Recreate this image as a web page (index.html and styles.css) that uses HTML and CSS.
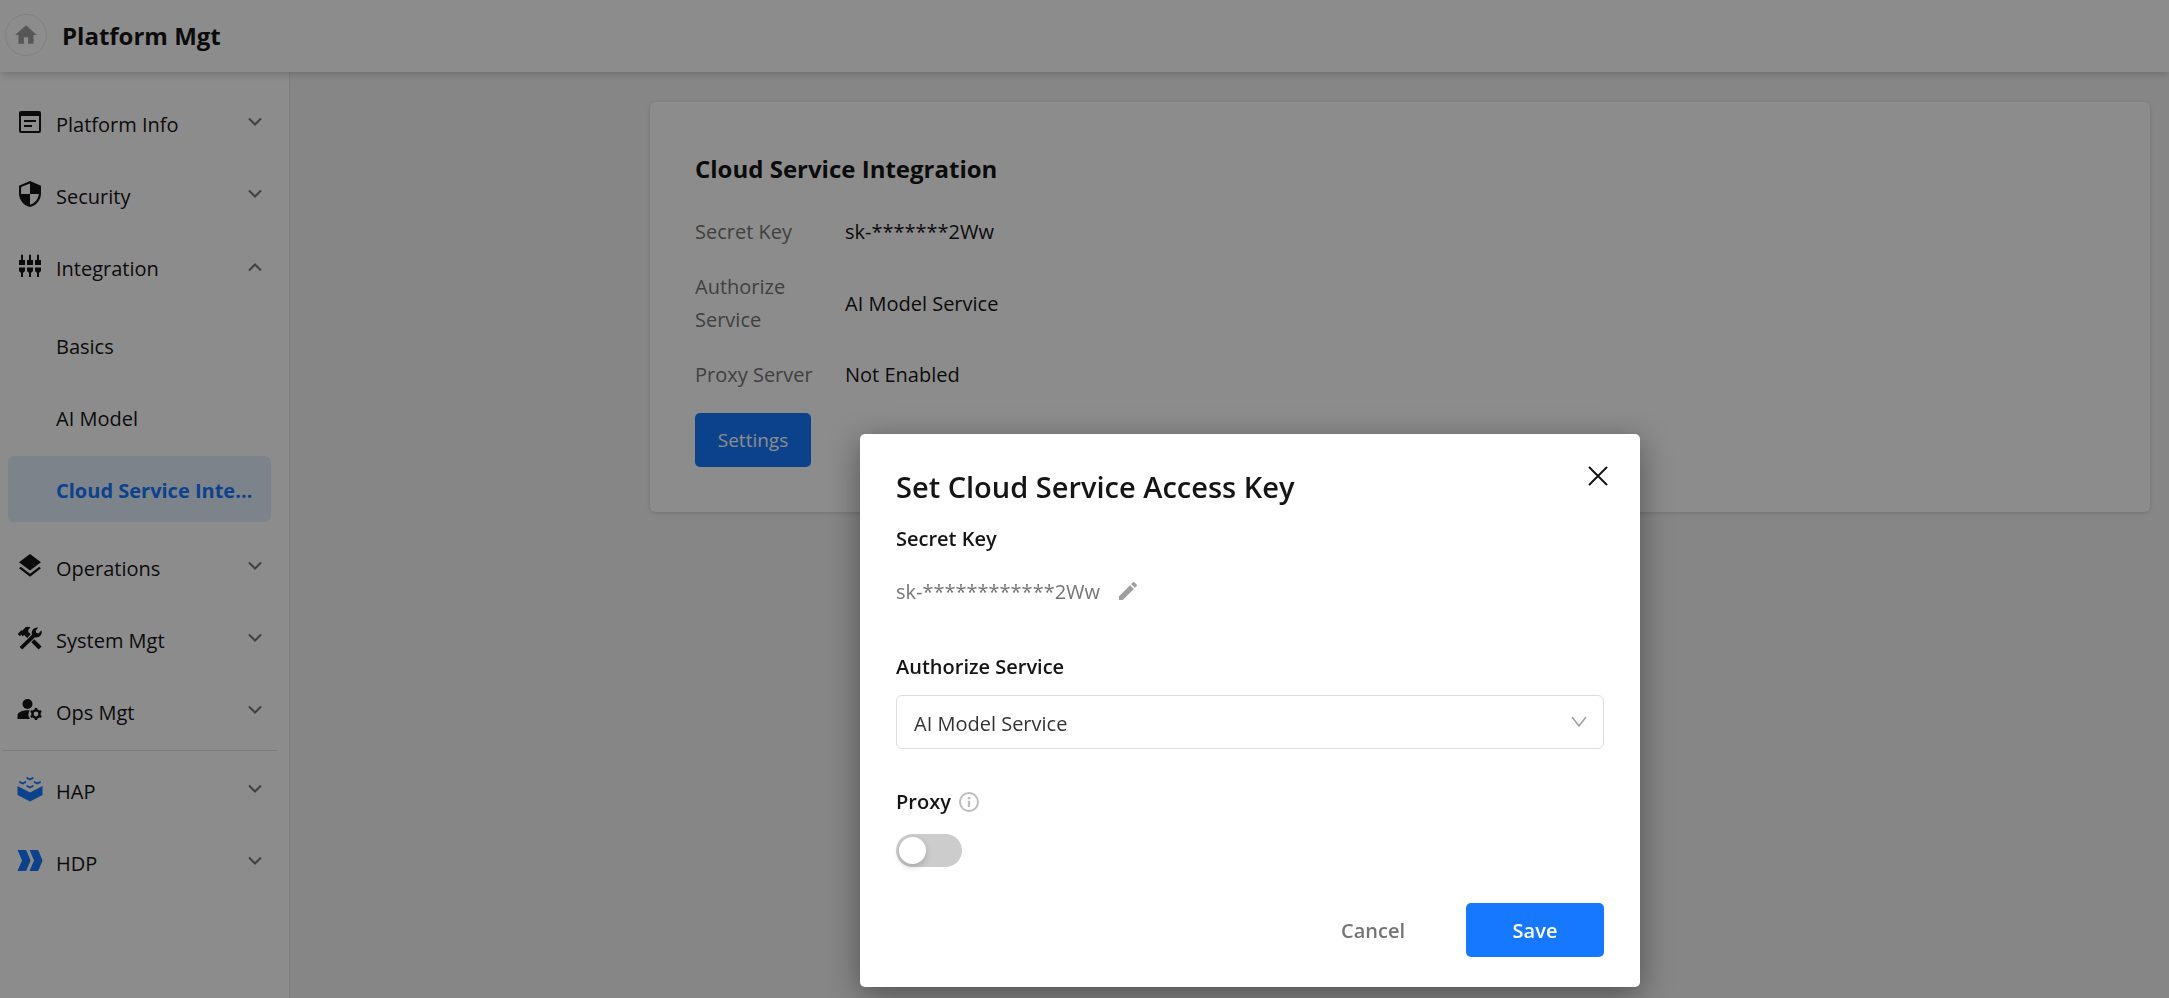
FILE: index.html
```html
<!DOCTYPE html>
<html lang="en">
<head>
  <meta charset="UTF-8">
  <meta name="viewport" content="width=device-width, initial-scale=1.0">
  <title>Platform Mgt - Cloud Service Integration</title>
  <link rel="stylesheet" href="styles.css">
</head>
<body>
  <svg class="defs" aria-hidden="true">
    <symbol id="chevron" viewBox="0 0 14 10"><path d="M1 1.500l6 6 6-6" fill="none" stroke="currentColor" stroke-width="2"/></symbol>
  </svg>

  <header class="topbar">
    <a href="#" class="home" aria-label="Home">
      <svg width="26" height="26" viewBox="0 0 24 24"><path d="M10 20v-6h4v6h5v-8h3L12 3 2 12h3v8z"/></svg>
    </a>
    <h1>Platform Mgt</h1>
  </header>

  <div class="layout">
    <nav class="sidebar">
      <a href="#" class="item">
        <svg class="icon" viewBox="0 0 26 26"><path fill-rule="evenodd" d="M4 2h18a2 2 0 0 1 2 2v18a2 2 0 0 1-2 2H4a2 2 0 0 1-2-2V4a2 2 0 0 1 2-2zm0 5v15h18V7zM7 11h12v2H7zm0 5h8v2H7z"/></svg>
        <span class="label">Platform Info</span>
        <svg class="arrow"><use href="#chevron"/></svg>
      </a>
      <a href="#" class="item">
        <svg class="icon" viewBox="0 0 26 26"><path fill-rule="evenodd" d="M13 0L2 4.700v7.500C2 18.800 6.500 24.500 13 26c6.500-1.500 11-7.200 11-13.800V4.700zM13 2.600V13H4.100V6zM13 13h8.900c-.6 5-4 9.300-8.900 10.800z"/></svg>
        <span class="label">Security</span>
        <svg class="arrow"><use href="#chevron"/></svg>
      </a>
      <a href="#" class="item">
        <svg class="icon" viewBox="0 0 26 26"><path d="M4 2.500a1 1 0 0 1 2 0V7h2v5H2V7h2zM12 2.500a1 1 0 0 1 2 0V7h2v5h-6V7h2zM20 2.500a1 1 0 0 1 2 0V7h2v5h-6V7h2zM2 14.500h6V17c0 1.300-.8 2.300-2 2.800V24H4v-4.200c-1.200-.5-2-1.500-2-2.800zM10 14.500h6V17c0 1.300-.8 2.300-2 2.800V24h-2v-4.200c-1.200-.5-2-1.500-2-2.800zM18 14.500h6V17c0 1.300-.8 2.300-2 2.800V24h-2v-4.200c-1.200-.5-2-1.500-2-2.800z"/></svg>
        <span class="label">Integration</span>
        <svg class="arrow up"><use href="#chevron"/></svg>
      </a>
      <div class="submenu">
        <a href="#" class="item sub"><span class="label">Basics</span></a>
        <a href="#" class="item sub"><span class="label">AI Model</span></a>
        <a href="#" class="item sub active"><span class="label">Cloud Service Integration</span></a>
      </div>
      <a href="#" class="item">
        <svg class="icon" viewBox="0 0 26 26"><path d="M13 1l11 8.300-11 8.300L2 9.300zM13 20.800l9.200-7L24 15.200 13 23.700 2 15.200l1.800-1.400z"/></svg>
        <span class="label">Operations</span>
        <svg class="arrow"><use href="#chevron"/></svg>
      </a>
      <a href="#" class="item">
        <svg class="icon" viewBox="0 0 26 26"><path d="M.8 9l3.400-3.800 1 .6L8.500 2.300C9.500 1.500 11 1.500 13.500 2.200L11.200 5l.3 2.300 2.300 2-3.600 3.700-3-3-1.700 1.500L4.400 9.400l-1.600 1.800z"/><path d="M2.600 21.900L15 9.700C14 6 16.300 2.300 20.600 2.400l.7.200-2.700 3.200.7 2 2.200.6 2.700-3 .5.900c.5 4-3.200 7-6.700 6L5.200 24.500zM17.200 14.200l7.400 7.200-3 3-7.300-7.200z"/></svg>
        <span class="label">System Mgt</span>
        <svg class="arrow"><use href="#chevron"/></svg>
      </a>
      <a href="#" class="item">
        <svg class="icon" viewBox="0 0 26 26"><circle cx="10.500" cy="7" r="5"/><path d="M12.800 13.300c-6.500-.6-12.300 1.600-12.300 5.200V22h12.600a7.500 7.500 0 0 1-.3-8.700z"/><g fill="none" stroke="currentColor"><circle cx="19" cy="17" r="3.600" stroke-width="2.400"/><path stroke-width="2.400" d="M19 11v2.400M19 20.600V23M13.800 14l2.100 1.200M22.100 18.800l2.100 1.200M13.800 20l2.100-1.200M22.100 15.200l2.100-1.200"/></g></svg>
        <span class="label">Ops Mgt</span>
        <svg class="arrow"><use href="#chevron"/></svg>
      </a>
      <hr>
      <a href="#" class="item">
        <svg class="icon brand" viewBox="0 0 26 26"><path d="M.5 10L13 16.500 25.500 10v9L13 25.500.5 19z"/><g fill="none" stroke="currentColor" stroke-width="1.800"><path d="M9.600 2c.8 0 1 .2 1.500.6l1.900 1 1.900-1c.5-.4.7-.6 1.500-.6M2.300 6c.8 0 1 .2 1.500.6l1.900 1 1.900-1c.5-.4.7-.6 1.500-.6M16.900 6c.8 0 1 .2 1.500.6l1.900 1 1.900-1c.5-.4.7-.6 1.500-.6M9.600 10c.8 0 1 .2 1.500.6l1.900 1 1.900-1c.5-.4.7-.6 1.500-.6"/></g></svg>
        <span class="label">HAP</span>
        <svg class="arrow"><use href="#chevron"/></svg>
      </a>
      <a href="#" class="item">
        <svg class="icon brand" viewBox="0 0 26 26"><path d="M.5 2H8c.8 0 1.200.3 1.600 1l3.600 8.600c.3.700.3 1.200 0 1.800L9.600 22c-.4.700-.8 1-1.600 1H.5L5 12.500zM12.500 2H20c.8 0 1.200.3 1.600 1l3.600 8.600c.3.700.3 1.200 0 1.800L21.600 22c-.4.700-.8 1-1.600 1h-7.500L17 12.500z"/></svg>
        <span class="label">HDP</span>
        <svg class="arrow"><use href="#chevron"/></svg>
      </a>
    </nav>

    <main class="content">
      <section class="card">
        <h2>Cloud Service Integration</h2>
        <dl>
          <div class="row"><dt>Secret Key</dt><dd>sk-*******2Ww</dd></div>
          <div class="row"><dt>Authorize Service</dt><dd>AI Model Service</dd></div>
          <div class="row"><dt>Proxy Server</dt><dd>Not Enabled</dd></div>
        </dl>
        <button type="button" class="btn settings">Settings</button>
      </section>
    </main>
  </div>

  <!-- Access key modal -->
  <div class="mask"></div>
  <form class="modal" role="dialog" aria-labelledby="modal-title">
    <button type="button" class="close" aria-label="Close">
      <svg width="20" height="20" viewBox="0 0 20 20"><path d="M1 1l18 18M19 1L1 19" fill="none" stroke="currentColor" stroke-width="2"/></svg>
    </button>
    <h2 id="modal-title">Set Cloud Service Access Key</h2>
    <h3>Secret Key</h3>
    <div class="key">
      <span>sk-************2Ww</span>
      <button type="button" aria-label="Edit key">
        <svg width="24" height="24" viewBox="0 0 24 24"><path d="M3 17.250V21h3.750L17.810 9.940l-3.750-3.750zM20.710 7.040a1 1 0 0 0 0-1.410l-2.340-2.340a1 1 0 0 0-1.410 0l-1.830 1.830 3.750 3.750z"/></svg>
      </button>
    </div>
    <label class="title" for="service">Authorize Service</label>
    <div class="select">
      <select id="service">
        <option>AI Model Service</option>
      </select>
      <svg width="16" height="12" viewBox="0 0 16 12"><path d="M1 1l7 9 7-9" fill="none" stroke="currentColor" stroke-width="1.500"/></svg>
    </div>
    <div class="proxy">
      <label class="title" for="proxy">Proxy</label>
      <svg width="20" height="20" viewBox="0 0 20 20"><circle cx="10" cy="10" r="9" fill="none" stroke="currentColor" stroke-width="2"/><path d="M8.800 5h2.400v2.200H8.800zM8.800 8.800h2.400V15H8.800z"/></svg>
    </div>
    <input type="checkbox" id="proxy" class="switch">
    <div class="actions">
      <button type="button" class="btn cancel">Cancel</button>
      <button type="submit" class="btn save">Save</button>
    </div>
  </form>
</body>
</html>
```
FILE: styles.css
```css
* { margin:0; padding:0; box-sizing:border-box; }
body { font-family:'Segoe UI', 'Open Sans', sans-serif; font-size:20px; line-height:33px; color:#151515; background:#f5f5f5; min-height:100vh; display:flex; flex-direction:column; overflow:hidden; }
a { color:inherit; text-decoration:none; }
button { font-family:inherit; font-size:20px; border:none; background:none; cursor:pointer; }
svg { fill:currentColor; flex:none; }
.defs { position:absolute; width:0; height:0; }

/* Header */
.topbar { display:flex; align-items:center; gap:15px; height:72px; padding:0 5px 2px; background:#fff; box-shadow:0 2px 8px rgba(0,0,0,0.2); z-index:1; }
.home { display:flex; align-items:center; justify-content:center; width:42px; height:42px; border:1px solid #eaeaea; border-radius:50%; color:#9e9e9e; }
.topbar h1 { font-size:24px; font-weight:700; }

/* Sidebar */
.layout { display:flex; flex:1; }
.sidebar { width:290px; padding:18px 18px 18px 8px; background:#fff; border-right:1px solid #e6e6e6; display:flex; flex-direction:column; gap:6px; }
.item { display:flex; align-items:center; height:66px; padding:0 9px; border-radius:6px; }
.icon { width:26px; height:26px; margin:0 13px 2px 0; }
.brand { color:#1677ff; }
.label { flex:1; padding-top:2px; white-space:nowrap; overflow:hidden; text-overflow:ellipsis; }
.arrow { width:14px; height:10px; margin-bottom:3px; color:#757575; }
.arrow.up { margin-bottom:0; transform:rotate(180deg); }
.submenu { display:flex; flex-direction:column; gap:6px; padding:6px 0; }
.sub { padding:0 16px 0 48px; }
.active { background:#e3effe; color:#1677ff; font-weight:700; }
.sidebar hr { border:none; border-top:1px solid #e0e0e0; margin:0 -6px; }

/* Content */
.content { flex:1; padding:30px 19px; }
.card { max-width:1500px; margin-left:auto; padding:45px; background:#fff; border-radius:6px; box-shadow:0 1px 4px rgba(0,0,0,0.16); }
.card h2 { font-size:24px; line-height:43px; font-weight:700; margin-bottom:25px; }
.row { display:flex; align-items:center; gap:30px; margin-bottom:22px; }
.row dt { width:120px; color:#757575; }
.btn { height:54px; border-radius:5px; }
.settings { width:116px; background:#1677ff; color:#fff; font-size:19px; }

/* Modal */
.mask { position:fixed; inset:0; background:rgba(0,0,0,0.45); z-index:2; }
.modal { position:absolute; z-index:3; left:860px; top:434px; width:780px; padding:35px 36px 30px; background:#fff; border-radius:5px; box-shadow:0 8px 32px rgba(0,0,0,0.4); display:flex; flex-direction:column; }
.modal h2 { font-size:29px; line-height:36px; font-weight:600; margin-bottom:17px; }
.modal h3, .title { font-size:20px; line-height:33px; font-weight:600; }
.close { position:absolute; top:32px; right:32px; width:20px; height:20px; color:#151515; }
.close svg { display:block; }
.key { display:flex; align-items:center; gap:16px; height:54px; margin:9px 0 32px; color:#757575; }
.key button { display:flex; color:#9e9e9e; }
.select { position:relative; margin:12px 0 36px; }
.select select { display:block; width:100%; height:54px; padding:2px 17px 0; appearance:none; border:1px solid #ddd; border-radius:6px; background:#fff; font-family:inherit; font-size:20px; color:#333; }
.select svg { position:absolute; right:17px; top:21px; color:#9e9e9e; pointer-events:none; }
.proxy { display:flex; align-items:center; gap:8px; color:#151515; }
.proxy svg { color:#bdbdbd; }
.switch { appearance:none; width:66px; height:33px; margin:16px 0 36px; padding:3px; border-radius:17px; background:#ccc; cursor:pointer; }
.switch::before { content:''; display:block; width:27px; height:27px; border-radius:50%; background:#fff; box-shadow:0 3px 6px rgba(0,35,11,0.2); }
.switch:checked { background:#1677ff; }
.switch:checked::before { margin-left:33px; }
.actions { display:flex; justify-content:flex-end; gap:24px; }
.actions .btn { width:138px; font-weight:600; }
.cancel { color:#757575; }
.save { background:#1677ff; color:#fff; }
```
